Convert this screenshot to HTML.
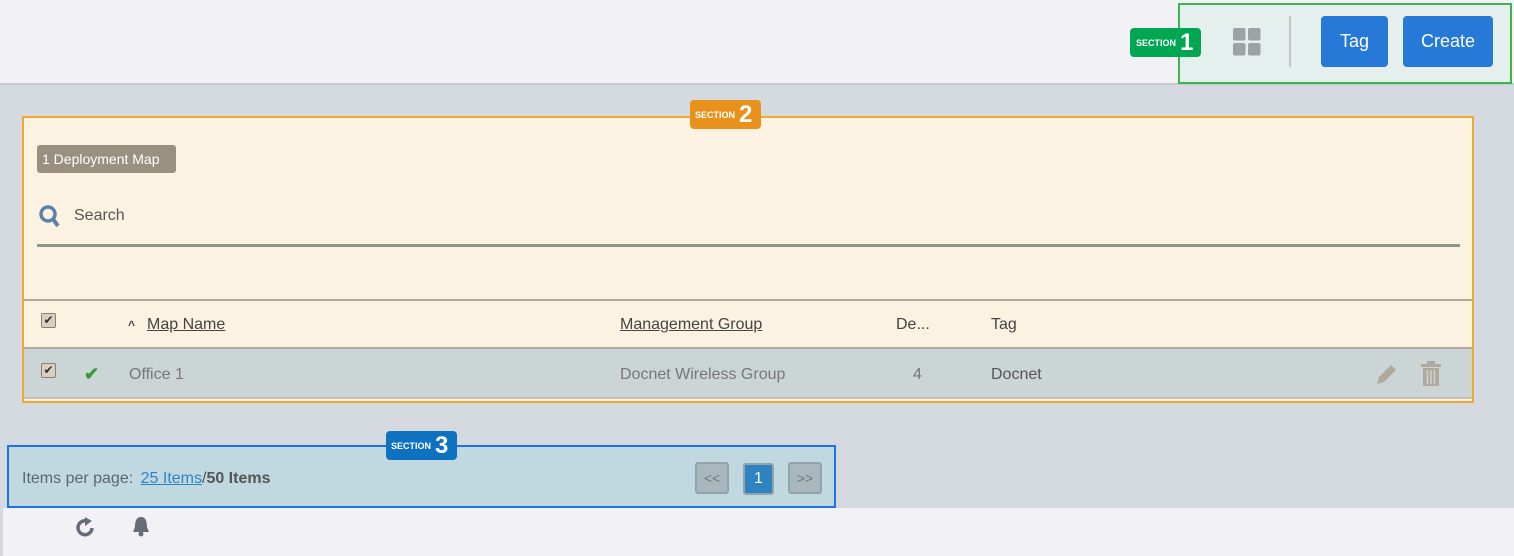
<!DOCTYPE html>
<html><head><style>
*{margin:0;padding:0;box-sizing:border-box}
body{width:1514px;height:556px;background:#d5d9e0;font-family:"Liberation Sans",sans-serif;position:relative;overflow:hidden}
.abs{position:absolute}
.topbar{left:0;top:0;width:1514px;height:85px;background:#f2f2f6;border-bottom:2px solid #c8c9ce}
.btn{background:#2679d6;color:#fff;font-size:18px;border-radius:4px;display:flex;align-items:center;justify-content:center}
.badge{color:#fff;font-weight:bold;border-radius:4px;display:flex;align-items:center;gap:4px}
.badge small{font-size:9px}
.badge b{font-size:24px}
.s2{left:22px;top:116px;width:1452px;height:287px;background:#fcf2e2;border:2px solid #f0a830}
.cb{width:15px;height:15px;border:1px solid #8a8070;background:#d8d0c0;border-radius:2px;font-size:12px;line-height:13px;text-align:center;color:#333}
.t{font-size:16px;color:#444}
.pg{width:34px;height:32px;border:2px solid #94a3a8;background:#a9b8bc;border-radius:3px;color:#6d7a80;font-size:14px;display:flex;align-items:center;justify-content:center}
</style></head><body>
<div class="abs topbar"></div>
<div class="abs" style="left:1178px;top:3px;width:334px;height:81px;border:2px solid #3cb54a;background:#e5efee"></div>
<div class="abs badge" style="left:1130px;top:28px;width:71px;height:29px;background:#00a651;padding-left:6px"><small>SECTION</small><b>1</b></div>
<svg class="abs" style="left:1233px;top:28px" width="28" height="28"><rect x="0" y="0" width="12.5" height="12.5" rx="2" fill="#9ba3a3"/><rect x="15" y="0" width="12.5" height="12.5" rx="2" fill="#9ba3a3"/><rect x="0" y="15" width="12.5" height="12.5" rx="2" fill="#9ba3a3"/><rect x="15" y="15" width="12.5" height="12.5" rx="2" fill="#9ba3a3"/></svg>
<div class="abs" style="left:1289px;top:16px;width:2px;height:51px;background:#c2c8c8"></div>
<div class="abs btn" style="left:1321px;top:16px;width:67px;height:51px">Tag</div>
<div class="abs btn" style="left:1403px;top:16px;width:90px;height:51px">Create</div>

<div class="abs s2"></div>
<div class="abs badge" style="left:690px;top:100px;width:71px;height:29px;background:#e8911c;padding-left:5px"><small>SECTION</small><b>2</b></div>
<div class="abs" style="left:37px;top:145px;width:139px;height:28px;background:#9a9080;border-radius:3px;color:#fff;font-size:14px;line-height:28px;padding-left:5px">1 Deployment Map</div>
<svg class="abs" style="left:38px;top:204px" width="24" height="24"><circle cx="10" cy="10" r="7" stroke="#5b82a8" stroke-width="3.5" fill="none"/><line x1="15" y1="15" x2="20" y2="22" stroke="#5b82a8" stroke-width="4"/></svg>
<div class="abs t" style="left:74px;top:207px;color:#555">Search</div>
<div class="abs" style="left:37px;top:244px;width:1423px;height:3px;background:#8e9590"></div>
<div class="abs" style="left:24px;top:299px;width:1448px;height:2px;background:#b0a898"></div>
<div class="abs cb" style="left:41px;top:313px">✔</div>
<div class="abs" style="left:128px;top:318px;font-size:12px;font-weight:bold;color:#444">^</div>
<div class="abs t" style="left:147px;top:316px;text-decoration:underline">Map Name</div>
<div class="abs t" style="left:620px;top:316px;text-decoration:underline">Management Group</div>
<div class="abs t" style="left:896px;top:316px">De...</div>
<div class="abs t" style="left:991px;top:316px">Tag</div>
<div class="abs" style="left:24px;top:347px;width:1448px;height:2px;background:#b0a898"></div>
<div class="abs" style="left:24px;top:349px;width:1448px;height:50px;background:#ccd5d6;border-bottom:2px solid #c4c0b6"></div>
<div class="abs cb" style="left:41px;top:363px">✔</div>
<div class="abs" style="left:84px;top:364px;color:#3a9a3a;font-size:18px;font-weight:bold">✔</div>
<div class="abs t" style="left:129px;top:366px;color:#777">Office 1</div>
<div class="abs t" style="left:620px;top:366px;color:#777">Docnet Wireless Group</div>
<div class="abs t" style="left:913px;top:366px;color:#777">4</div>
<div class="abs t" style="left:991px;top:366px;color:#555">Docnet</div>
<svg class="abs" style="left:1373px;top:362px" width="26" height="26"><path d="M4 22 L6 15 L18 3 L23 8 L11 20 Z" fill="#b0aa9c"/></svg>
<svg class="abs" style="left:1420px;top:361px" width="24" height="26"><rect x="1" y="3" width="20" height="3" fill="#b0aa9c"/><rect x="7" y="0" width="8" height="4" fill="#b0aa9c"/><path d="M3 7 H19 V25 H3 Z" fill="#b0aa9c"/><path d="M7.5 9 V23 M11 9 V23 M14.5 9 V23" stroke="#ccd5d6" stroke-width="1.5"/></svg>

<div class="abs" style="left:7px;top:445px;width:829px;height:63px;background:#c0d8df;border:2px solid #1a73e8"></div>
<div class="abs badge" style="left:386px;top:431px;width:71px;height:29px;background:#0f72c0;padding-left:5px"><small>SECTION</small><b>3</b></div>
<div class="abs" style="left:22px;top:470px;font-size:16px;color:#5c6670">Items per page: <span style="color:#2a85c8;text-decoration:underline;margin-left:3px">25 Items</span><span style="color:#555">/</span><b style="color:#555">50 Items</b></div>
<div class="abs pg" style="left:695px;top:462px">&lt;&lt;</div>
<div class="abs pg" style="left:743px;top:463px;width:31px;background:#2e84c0;color:#fff;font-size:16px">1</div>
<div class="abs pg" style="left:788px;top:462px">&gt;&gt;</div>

<div class="abs" style="left:3px;top:508px;width:1511px;height:48px;background:#f2f2f6"></div>
<svg class="abs" style="left:74px;top:516px" width="24" height="24"><path d="M18 12 A7 7 0 1 1 13 5" stroke="#666d78" stroke-width="3.5" fill="none"/><path d="M11 1 L18 5 L11 10 Z" fill="#666d78"/></svg>
<svg class="abs" style="left:131px;top:515px" width="20" height="24"><path d="M10 2 C5 2 4 7 4 12 L2 17 H18 L16 12 C16 7 15 2 10 2 Z" fill="#666d78"/><circle cx="10" cy="19" r="2.5" fill="#666d78"/></svg>
</body></html>
